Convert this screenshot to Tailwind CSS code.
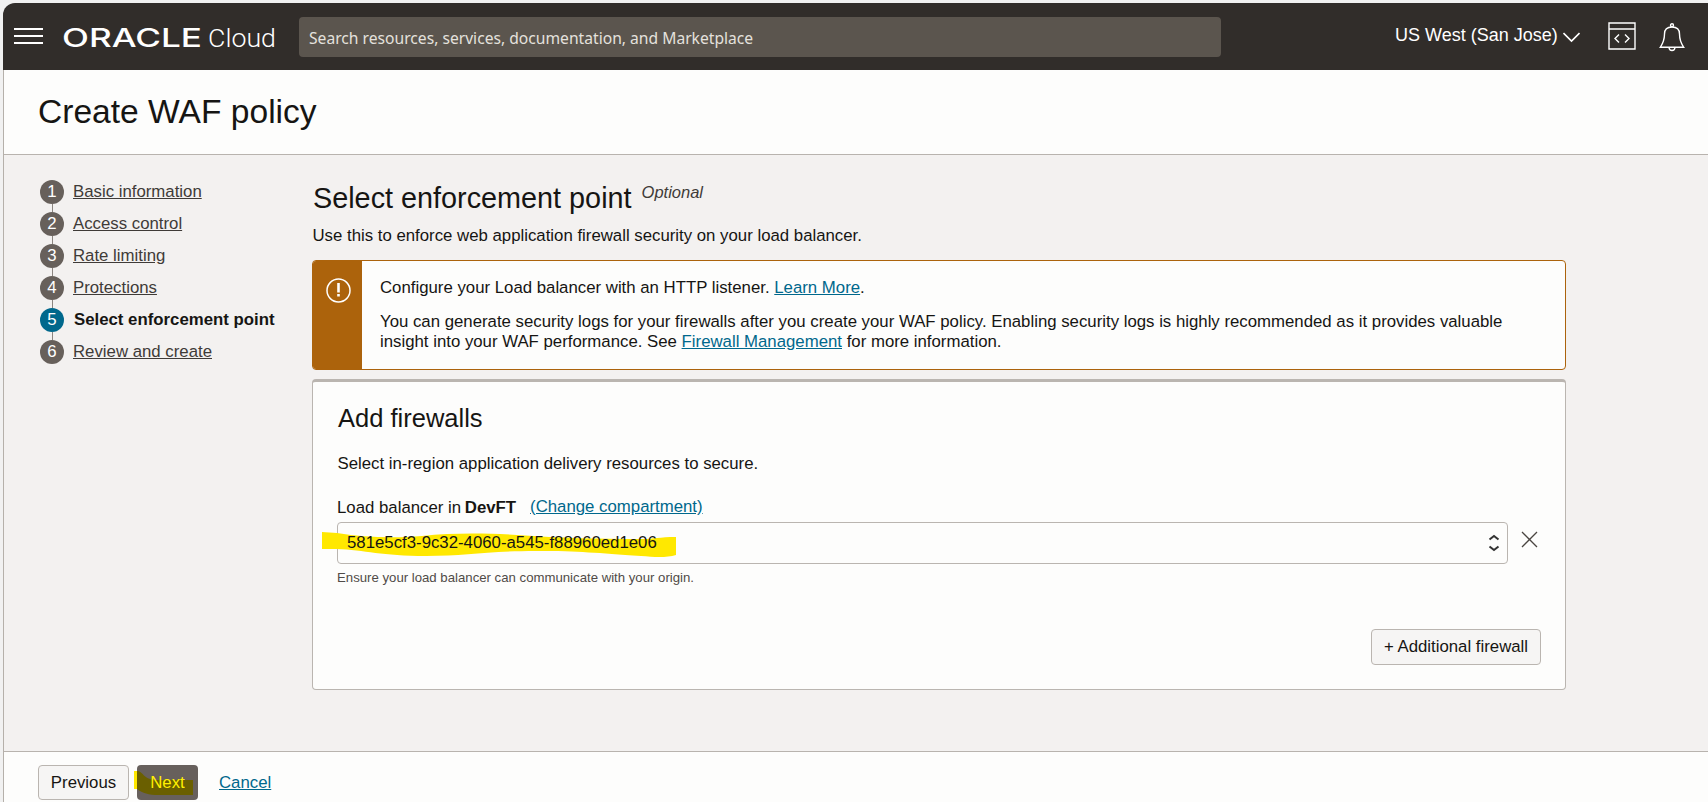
<!DOCTYPE html>
<html lang="en">
<head>
<meta charset="utf-8">
<title>Create WAF policy</title>
<script src="https://cdn.jsdelivr.net/npm/@tailwindcss/browser@4"></script>
</head>
<body class="h-[802px] w-[1708px] overflow-hidden bg-[#f1f1f1] pt-[3px] pl-[3px] font-['Liberation_Sans',Arial,sans-serif] text-[16.8px] leading-5 text-[#161513]">
<div class="flex h-[799px] flex-col overflow-hidden rounded-tl-xl">
  <header class="flex h-[67px] shrink-0 items-start bg-[#312d2a] text-white">
    <svg class="mt-[25px] ml-[11px] shrink-0" width="29" height="17" viewBox="0 0 29 17" stroke="#fff" stroke-width="2"><path d="M0 1h29M0 8h29M0 15h29"/></svg>
    <svg class="mt-[19px] ml-[18px] shrink-0" width="220" height="32" viewBox="0 0 220 32" fill="#fff">
      <text x="1" y="24.500" font-family="Inter, sans-serif" font-weight="500" font-size="25.500" textLength="140" lengthAdjust="spacingAndGlyphs">ORACLE</text>
      <text x="147" y="24.500" font-family="Roboto, sans-serif" font-weight="300" font-size="26.500" textLength="68" lengthAdjust="spacingAndGlyphs">Cloud</text>
    </svg>
    <div class="mt-[14px] ml-[18px] flex h-10 w-[922px] shrink-0 items-center rounded bg-[#5b554e] pt-px pl-[10px] font-['Noto_Sans','Open_Sans',sans-serif] text-[15.65px] whitespace-nowrap text-[#e4e1dd]">Search resources, services, documentation, and Marketplace</div>
    <div class="mt-[22px] ml-[174px] w-[163px] shrink-0 text-[18px] whitespace-nowrap">US West (San Jose)</div>
    <svg class="mt-[29px] ml-[5px] shrink-0" width="17" height="11" viewBox="0 0 17 11" fill="none" stroke="#fff" stroke-width="1.600"><path d="M.5 1l8 8 8-8"/></svg>
    <svg class="mt-[19px] ml-[28px] shrink-0" width="28" height="28" viewBox="0 0 28 28" fill="none" stroke="#fff" stroke-width="1.400"><path d="M1 1h26v26H1zM1 7h26M11 12.500L7 16.500l4 4M17 12.500l4 4-4 4"/></svg>
    <svg class="mt-[20px] ml-[23px] shrink-0" width="26" height="29" viewBox="0 0 26 29" fill="none" stroke="#fff" stroke-width="1.400"><circle cx="13" cy="2.200" r="1.500"/><path d="M1.300 24.300c3-4.500 4.200-7.300 4.200-13.300C5.500 6.500 8.500 4 13 4s7.500 2.500 7.500 7c0 6 1.200 8.800 4.200 13.300zM10 24.500c.3 4 5.700 4 6 0"/></svg>
  </header>
  <div class="flex h-[732px] flex-col border-l border-[#b5b0aa] bg-[#f3f1f0]">
    <div class="flex h-[85px] shrink-0 items-center border-b border-[#b8b3ae] bg-[#fdfdfc] pl-[34px]">
      <h1 class="text-[33.6px] leading-10">Create WAF policy</h1>
    </div>
    <div class="flex h-[596px] shrink-0">
      <nav class="w-[308px] shrink-0 pt-[25px] pl-9 text-[#3f3b38]">
        <ol class="flex flex-col">
          <li class="flex h-8"><div class="flex w-6 flex-col items-center"><span class="size-6 shrink-0 rounded-full bg-[#67605b] text-center leading-[23px] text-white">1</span><span class="h-2 w-px bg-[#8b8580]"></span></div><a class="ml-[9px] underline leading-[23px]">Basic information</a></li>
          <li class="flex h-8"><div class="flex w-6 flex-col items-center"><span class="size-6 shrink-0 rounded-full bg-[#67605b] text-center leading-[23px] text-white">2</span><span class="h-2 w-px bg-[#8b8580]"></span></div><a class="ml-[9px] underline leading-[23px]">Access control</a></li>
          <li class="flex h-8"><div class="flex w-6 flex-col items-center"><span class="size-6 shrink-0 rounded-full bg-[#67605b] text-center leading-[23px] text-white">3</span><span class="h-2 w-px bg-[#8b8580]"></span></div><a class="ml-[9px] underline leading-[23px]">Rate limiting</a></li>
          <li class="flex h-8"><div class="flex w-6 flex-col items-center"><span class="size-6 shrink-0 rounded-full bg-[#67605b] text-center leading-[23px] text-white">4</span><span class="h-2 w-px bg-[#8b8580]"></span></div><a class="ml-[9px] underline leading-[23px]">Protections</a></li>
          <li class="flex h-8"><div class="flex w-6 flex-col items-center"><span class="size-6 shrink-0 rounded-full bg-[#00688c] text-center leading-[23px] text-white">5</span><span class="h-2 w-px bg-[#8b8580]"></span></div><span class="ml-[10px] leading-[23px] font-bold whitespace-nowrap text-[#161513]">Select enforcement point</span></li>
          <li class="flex h-8"><div class="flex w-6 flex-col items-center"><span class="size-6 shrink-0 rounded-full bg-[#67605b] text-center leading-[23px] text-white">6</span></div><a class="ml-[9px] underline leading-[23px]">Review and create</a></li>
        </ol>
      </nav>
      <main class="w-[1254px] shrink-0 pt-[23px]">
        <div class="flex h-10 items-start pl-px">
          <h2 class="text-[28.8px] leading-10">Select enforcement point</h2>
          <span class="mt-[4px] ml-[10px] text-[16.5px] text-[#3f3b38] italic">Optional</span>
        </div>
        <p class="mt-[8px] pl-[0.5px]">Use this to enforce web application firewall security on your load balancer.</p>
        <section class="mt-[14px] flex h-[110px] overflow-hidden rounded border border-[#ac630c] bg-[#fdfdfc]">
          <div class="flex w-[49px] shrink-0 justify-center bg-[#ac630c] pt-[17px] pl-px">
            <svg width="25" height="25" viewBox="0 0 25 25" fill="none" stroke="#fff"><circle cx="12.500" cy="12.500" r="11.500" stroke-width="1.500"/><path d="M12.500 5v9.500M12.500 16v2.500" stroke-width="2.600"/></svg>
          </div>
          <div class="pt-[17px] pl-[18px] whitespace-nowrap">
            <p>Configure your Load balancer with an HTTP listener. <a class="text-[#00688c] underline">Learn More</a>.</p>
            <p class="mt-[14px]">You can generate security logs for your firewalls after you create your WAF policy. Enabling security logs is highly recommended as it provides valuable<br>insight into your WAF performance. See <a class="text-[#00688c] underline">Firewall Management</a> for more information.</p>
          </div>
        </section>
        <section class="mt-[9px] flex h-[311px] flex-col rounded border border-t-[3px] border-[#bab5b0] bg-[#fdfdfc] pr-6 pl-6">
          <h3 class="mt-5 pl-px text-[25.5px] leading-8">Add firewalls</h3>
          <p class="mt-[20px] pl-[0.5px]">Select in-region application delivery resources to secure.</p>
          <div class="mt-[24px] flex h-5"><span>Load balancer in <b class="-ml-px">DevFT</b></span><a class="-mt-px ml-[14px] text-[#00688c] underline">(Change compartment)</a></div>
          <div class="mt-[4px] flex">
            <div class="relative flex h-[42px] w-[1171px] items-center justify-between rounded border border-[#bab5b0] pr-[7px] pl-[9px]">
              <svg class="absolute -top-[1px] -left-[16px]" width="357" height="42" viewBox="0 0 357 42"><path fill="#ffe800" d="M0 10l15 1c30 5 60 5 85 3 30-3 60-3 95-1 45 3 80 4 125 4 12 0 17-2 34-2v18c-10 3-22 2-35 1-45-3-60-5-105-5-50 0-70 5-110 5-45 0-60-6-90-7L0 27z"/></svg>
              <span class="relative -mt-px">581e5cf3-9c32-4060-a545-f88960ed1e06</span>
              <svg width="12" height="18" viewBox="0 0 12 18" fill="none" stroke="#333" stroke-width="2"><path d="M1.500 5.500L6 2l4.500 3.500M1.500 12.500L6 16l4.500-3.500"/></svg>
            </div>
            <svg class="mt-[9px] ml-[13px]" width="17" height="17" viewBox="0 0 17 17" stroke="#4a4541" stroke-width="1.300"><path d="M1 1l15 15M16 1L1 16"/></svg>
          </div>
          <p class="mt-[5px] text-[13.2px] leading-[18px] text-[#504b47]">Ensure your load balancer can communicate with your origin.</p>
          <button class="mt-[42px] h-9 w-[170px] self-end rounded border border-[#bab5b0] bg-[#f6f5f4] pb-px whitespace-nowrap">+ Additional firewall</button>
        </section>
      </main>
    </div>
    <footer class="flex h-[51px] shrink-0 items-start border-t border-[#b8b3ae] bg-[#fdfdfc] pt-[13px] pl-[34px]">
      <button class="h-[35px] w-[91px] rounded border border-[#bab5b0] bg-[#f6f5f4]">Previous</button>
      <button class="relative ml-2 h-[35px] w-[61px] rounded bg-[#67605c]">
        <svg class="absolute top-[5px] -left-[3px]" width="60" height="27" viewBox="0 0 60 27"><path fill="#6a5f00" d="M3 1c6 0 6 8 18 9h38v15H25c-11 0-16-2-22-6z"/><path fill="#ffe800" d="M0 1h3v18H0z"/></svg>
        <span class="relative text-[#fff000]">Next</span>
      </button>
      <a class="mt-[8px] ml-[21px] text-[#00688c] underline">Cancel</a>
    </footer>
  </div>
</div>
</body>
</html>
